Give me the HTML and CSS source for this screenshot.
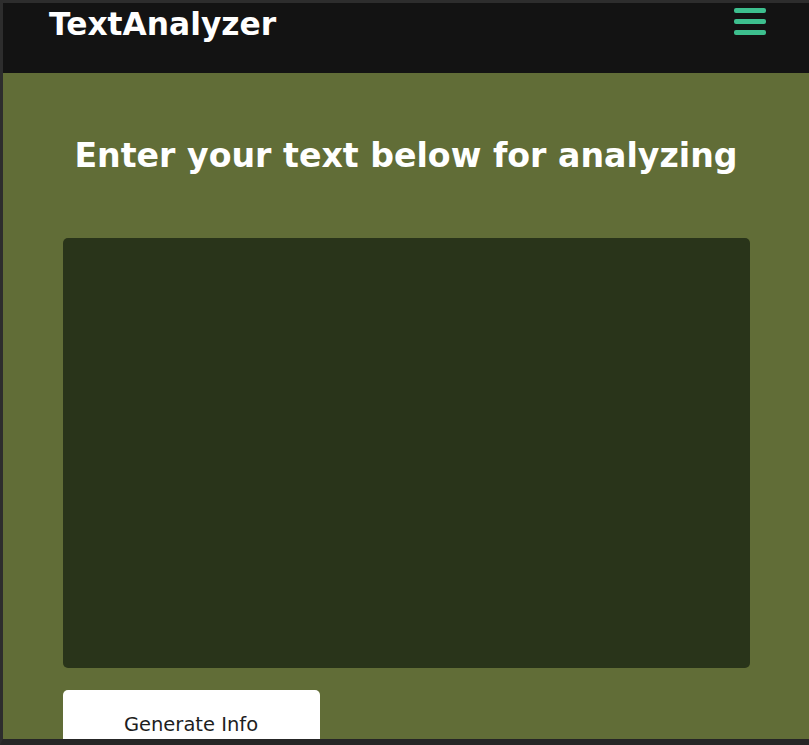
FILE: index.html
```html
<!DOCTYPE html>
<html lang="en">
<head>
<meta charset="utf-8">
<title>TextAnalyzer</title>
<link rel="stylesheet" href="styles.css">
</head>
<body>
<div class="app">
  <header class="navbar">
    <div class="brand">TextAnalyzer</div>
    <button class="menu" aria-label="Menu">
      <span class="bar"></span><span class="bar"></span><span class="bar"></span>
    </button>
  </header>
  <main class="main">
    <h1 class="heading">Enter your text below for analyzing</h1>
    <div class="panel">
      <textarea class="input"></textarea>
      <div class="actions">
        <button class="btn">Generate Info</button>
      </div>
    </div>
  </main>
</div>
</body>
</html>
```
FILE: styles.css
```css
html, body {
  margin: 0;
  height: 100%;
}
body {
  box-sizing: border-box;
  height: 745px;
  overflow: hidden;
  background: #616d37;
  border-top: 3px solid #2d2d2d;
  border-left: 3px solid #2d2d2d;
  border-bottom: 6px solid #262626;
  font-family: "DejaVu Sans", sans-serif;
}
.app {
  display: flex;
  flex-direction: column;
}
.navbar {
  height: 70px;
  background: #131313;
  display: flex;
  justify-content: space-between;
  align-items: flex-start;
  padding: 0 43px 0 46px;
}
.brand {
  color: #fff;
  font-size: 31.3px;
  font-weight: 600;
  line-height: 40px;
  margin-top: 1px;
}
.menu {
  background: none;
  border: none;
  padding: 0;
  margin-top: 5px;
  display: flex;
  flex-direction: column;
  gap: 6px;
  cursor: pointer;
}
.bar {
  display: block;
  width: 32px;
  height: 5px;
  border-radius: 2px;
  background: #3dbf8e;
}
.main {
  display: flex;
  flex-direction: column;
  align-items: center;
}
.heading {
  margin: 58px 0 0;
  color: #fff;
  font-size: 33.2px;
  font-weight: 700;
  line-height: 50px;
  text-align: center;
}
.panel {
  width: 687px;
  margin-top: 57px;
  display: flex;
  flex-direction: column;
  gap: 22px;
}
.input {
  box-sizing: border-box;
  width: 100%;
  height: 430px;
  resize: none;
  background: #29341a;
  border: none;
  border-radius: 5px;
  outline: none;
  color: #fff;
}
.actions {
  display: flex;
}
.btn {
  width: 257px;
  height: 64px;
  background: #fff;
  border: none;
  border-radius: 5px;
  font-family: "DejaVu Sans", sans-serif;
  font-size: 19.5px;
  font-weight: 400;
  color: #1e1e1e;
  padding: 5px 0 0;
  display: flex;
  align-items: center;
  justify-content: center;
}
```
